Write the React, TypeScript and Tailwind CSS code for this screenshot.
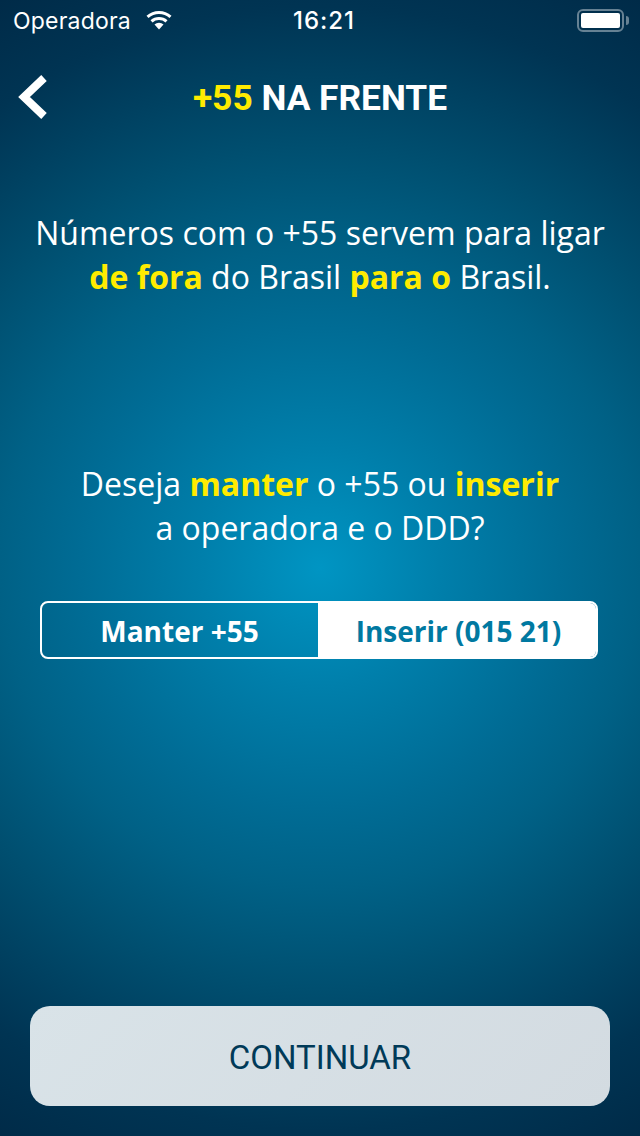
export default function App() {
  return (
    <div className="w-[640px] h-[1136px] flex flex-col overflow-hidden text-white bg-[radial-gradient(circle_at_320px_568px,#0095c3_0px,#007fab_120px,#006c95_240px,#006186_320px,#004f70_420px,#003453_562px,#002a47_660px)] font-['Open_Sans',sans-serif]">
      <div className="h-[40px] pt-[2px] flex items-center justify-between pl-[13px] pr-[11px] text-[23px] font-['Inter',sans-serif]">
        <div className="flex items-center gap-[13px] w-[200px]">
          <span className="tracking-[0.2px]">Operadora</span>
          <svg className="-mt-[2px]" width="30" height="22" viewBox="0 0 30 22" fill="white"><path d="M15 20.500l-4.500-5a6.500 6.500 0 0 1 9 0z"/><path d="M8.500 13.500a10 10 0 0 1 13 0l2-2.300a13 13 0 0 0-17 0z"/><path d="M4.500 9a16 16 0 0 1 21 0l2-2.300a19 19 0 0 0-25 0z"/></svg>
        </div>
        <span className="ml-[6px] font-medium text-[24px] tracking-[1px]">16:21</span>
        <div className="w-[200px] -mt-[2px] flex justify-end items-center gap-[2px]">
          <div className="w-[47px] h-[23px] border-2 border-white/40 rounded-[6px] p-[2px]"><div className="w-full h-full bg-white rounded-[2px]" /></div>
          <div className="w-[3px] h-[9px] bg-white/40 rounded-r-[3px]" />
        </div>
      </div>
      <div className="h-[114px] flex items-center relative justify-center pt-[2px] text-[35.300px] font-bold font-['Roboto',sans-serif]">
        <svg className="absolute left-[16px] top-[34px]" width="32" height="46" viewBox="0 0 32 46" fill="none" stroke="white" strokeWidth="8"><path d="M28 4L8 23l20 19"/></svg>
        <span><span className="text-[#ffeb00]">+55</span> NA FRENTE</span>
      </div>
      <p className="mt-[57px] text-center text-[32px] leading-[44px]">Números com o +55 servem para ligar<br/><b className="text-[#ffeb00]">de fora</b> do Brasil <b className="text-[#ffeb00]">para o</b> Brasil.</p>
      <p className="mt-[163px] text-center text-[32px] leading-[44px]">Deseja <b className="text-[#ffeb00]">manter</b> o +55 ou <b className="text-[#ffeb00]">inserir</b><br/>a operadora e o DDD?</p>
      <div className="mt-[51px] mx-[40px] w-[558px] h-[58px] flex border-2 border-white rounded-[8px] overflow-hidden text-[28px] font-bold">
        <div className="w-[276px] pt-[1px] pr-[1px] flex items-center justify-center">Manter +55</div>
        <div className="flex-1 pt-[1px] pl-[3px] flex items-center justify-center bg-white text-[#0079a1]">Inserir (015 21)</div>
      </div>
      <div className="mt-auto mb-[30px] mx-[30px] h-[100px] rounded-[20px] bg-[linear-gradient(135deg,#d9e3e8,#d3dbe1)] flex items-center justify-center pt-[4px] text-[33px] font-['Roboto',sans-serif] text-[#003a58]">CONTINUAR</div>
    </div>
  );
}
